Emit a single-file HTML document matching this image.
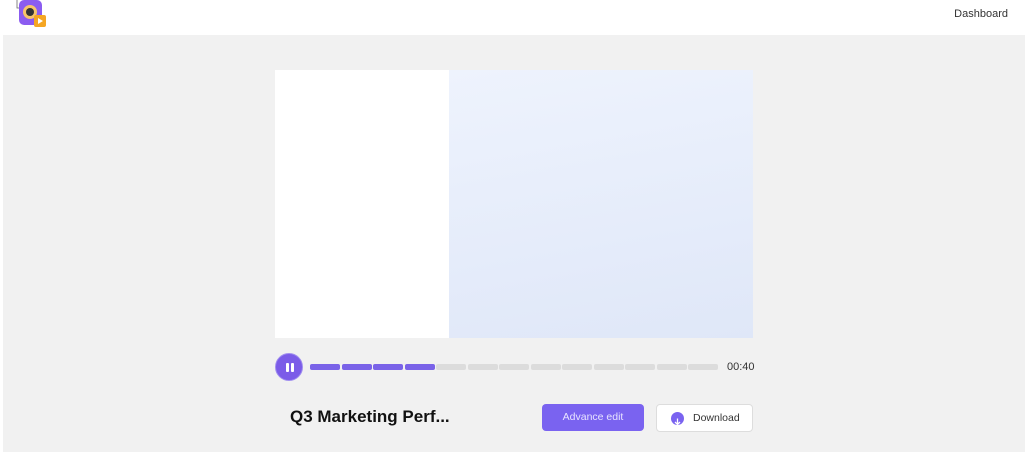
<!DOCTYPE html>
<html><head><meta charset="utf-8"><style>
*{margin:0;padding:0;box-sizing:border-box}
body{width:1028px;height:454px;background:#fff;font-family:"Liberation Sans",sans-serif;position:relative;overflow:hidden}
.hdr{position:absolute;left:0;top:0;width:1028px;height:35px;background:#fff}
.main{position:absolute;left:3px;top:35px;width:1022px;height:417px;background:#f1f1f1}
.dash{position:absolute;right:20px;top:8px;font-size:11px;color:#333}
.video{position:absolute;left:275px;top:70px;width:478px;height:268px;background:#fff}
.vr{position:absolute;left:174px;top:0;width:304px;height:268px;background:linear-gradient(170deg,#eef3fd,#dfe7f8)}
.play{position:absolute;left:275px;top:353px;width:28px;height:28px;border-radius:50%;background:#7b5ce8;border:1px solid #a08ef0}
.play i{position:absolute;top:9px;width:2.5px;height:9px;background:#fff;border-radius:1px}
.seg{position:absolute;top:364px;height:6px;border-radius:2px}
.time{position:absolute;left:727px;top:361px;font-size:11px;color:#333}
.title{position:absolute;left:290px;top:407px;font-size:17px;font-weight:bold;color:#111}
.adv{position:absolute;left:542px;top:404px;width:102px;height:27px;background:#7a63f0;border-radius:4px;color:#e8e4ff;font-size:10.5px;text-align:center;line-height:27px}
.dl{position:absolute;left:656px;top:404px;width:97px;height:28px;background:#fff;border:1px solid #ddd;border-radius:4px;font-size:10.5px;color:#333;line-height:26px;padding-left:36px}
.dl b{position:absolute;left:14px;top:7px;width:13px;height:13px;border-radius:50%;background:#7a63f0}
</style></head><body>
<div class="hdr">
<svg style="position:absolute;left:15px;top:0" width="34" height="30" viewBox="0 0 34 30">
<path d="M2 0 V8 H5" stroke="#666" fill="none" stroke-width="0.8"/>
<rect x="4" y="0" width="23" height="25" rx="5" fill="#8b5cf0"/>
<circle cx="15" cy="12" r="7" fill="#f7c56a"/><circle cx="15" cy="12" r="4" fill="#333"/>
<rect x="19" y="15" width="12" height="12" rx="2" fill="#f5a623"/><path d="M23 18 L28 21 L23 24Z" fill="#fff"/>
</svg>
<div class="dash">Dashboard</div>
</div>
<div class="main"></div>
<div class="video"><div class="vr"></div></div>
<div class="play"><i style="left:10px"></i><i style="left:15px"></i></div>
<div id="bar"></div>
<div class="time">00:40</div>
<div class="title">Q3 Marketing Perf...</div>
<div class="adv">Advance edit</div>
<div class="dl"><b><svg width="13" height="13" viewBox="0 0 13 13"><path d="M6.5 3.5V9M4 7l2.5 2.5L9 7" stroke="#fff" stroke-width="1.3" fill="none"/></svg></b>Download</div>
<script>
var h='';for(var i=0;i<13;i++){var x=310+i*31.5;var c=i<4?'#7a63e8':'#dcdcdc';h+='<div class="seg" style="left:'+x+'px;width:30px;background:'+c+'"></div>';}
document.getElementById('bar').innerHTML=h;
</script>
</body></html>
